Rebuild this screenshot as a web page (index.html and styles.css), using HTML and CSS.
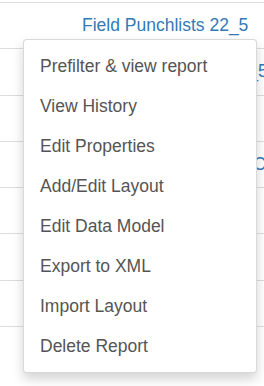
FILE: index.html
```html
<!DOCTYPE html>
<html>
<head>
    <title>Reports</title>
    <link rel="stylesheet" href="styles.css">
</head>
<body>
    <div class="report-list">
        <div class="report-row"><a class="report-link">Field Punchlists 22_5</a></div>
        <div class="report-row"><a class="report-link">Field Punchlists 2022_5</a></div>
        <div class="report-row"><a class="report-link"></a></div>
        <div class="report-row"><a class="report-link">Field Punchlists 22_5 Copy</a></div>
        <div class="report-row"><a class="report-link"></a></div>
        <div class="report-row"><a class="report-link"></a></div>
        <div class="report-row"><a class="report-link"></a></div>
        <div class="report-row"><a class="report-link"></a></div>
    </div>

    <ul class="dropdown-menu">
        <li><a href="#">Prefilter &amp; view report</a></li>
        <li><a href="#">View History</a></li>
        <li><a href="#">Edit Properties</a></li>
        <li><a href="#">Add/Edit Layout</a></li>
        <li><a href="#">Edit Data Model</a></li>
        <li><a href="#">Export to XML</a></li>
        <li><a href="#">Import Layout</a></li>
        <li><a href="#">Delete Report</a></li>
    </ul>
</body>
</html>
```

FILE: styles.css
```css
html, body { margin: 0; padding: 0; overflow: hidden; background: #fff; }
body { font-family: "Liberation Sans", Arial, sans-serif; font-size: 17.5px; position: relative; width: 264px; height: 386px; }
.report-list { padding-top: 2px; }
.report-row { height: 46.25px; box-sizing: border-box; border-top: 1px solid #dddddd; display: flex; align-items: center; padding-left: 82px; white-space: nowrap; overflow: hidden; }
.report-link { color: #337ab7; text-decoration: none; }
.dropdown-menu { position: absolute; left: 23px; top: 39px; width: 234px; box-sizing: border-box; margin: 0; padding: 6px 0; list-style: none; background: #fff; border: 1px solid rgba(0,0,0,.15); border-radius: 4px; box-shadow: 0 6px 12px rgba(0,0,0,.175); }
.dropdown-menu li a { display: block; height: 40px; line-height: 40px; padding: 0 16px; color: #555; text-decoration: none; white-space: nowrap; }
```
